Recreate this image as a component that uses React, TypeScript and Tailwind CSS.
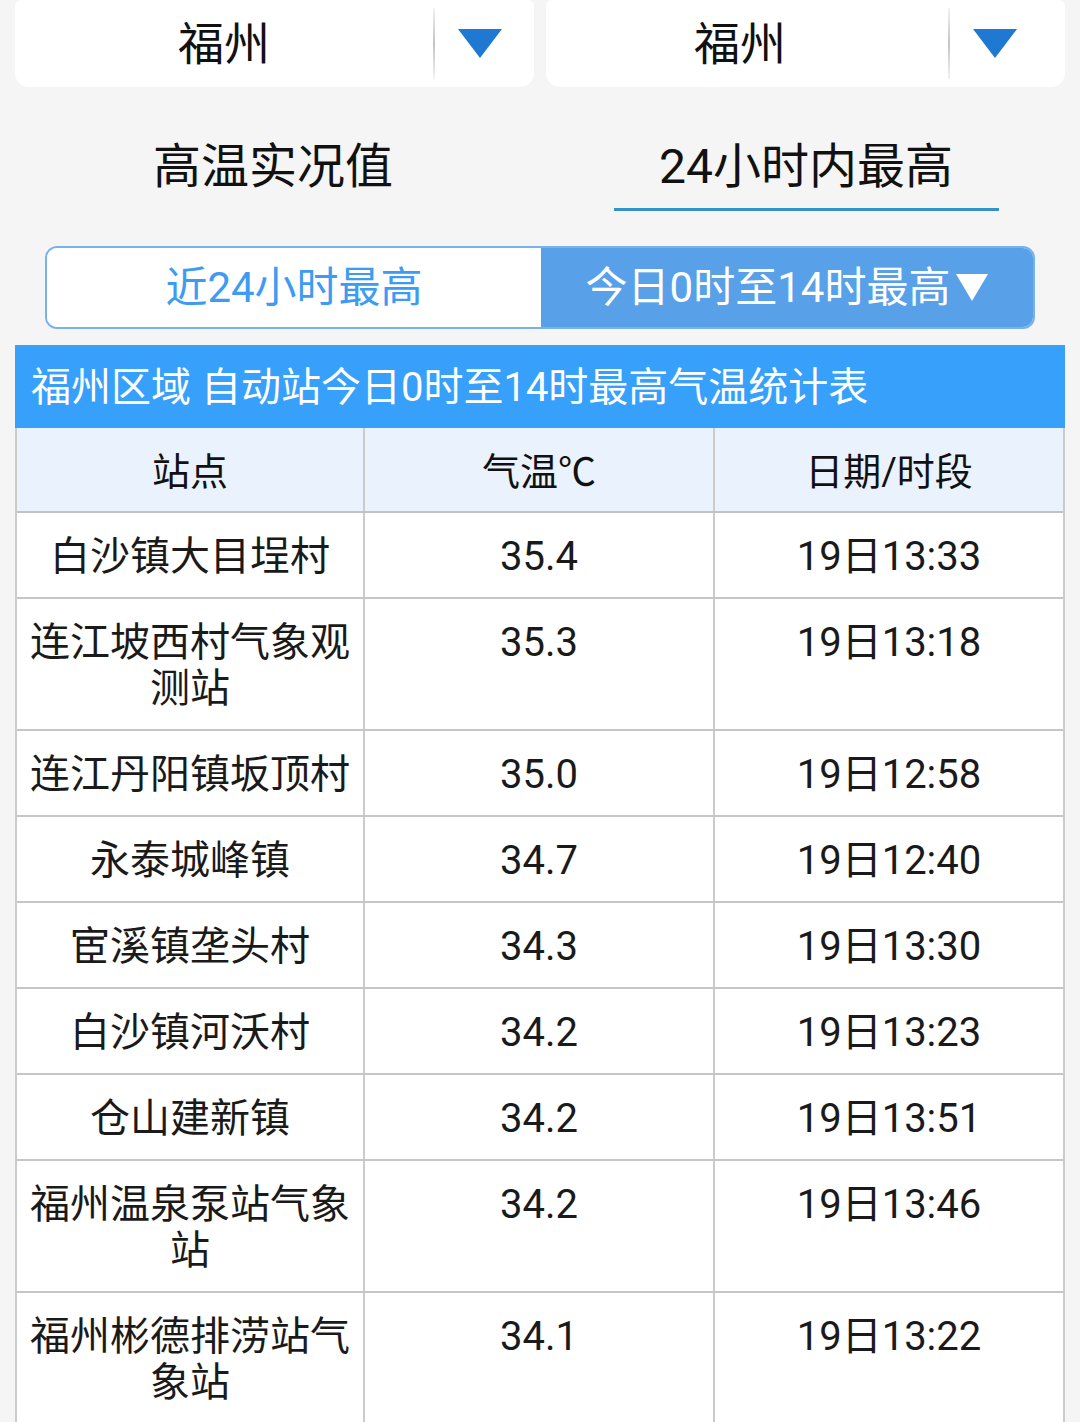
import React from 'react';

const FONT = { fontFamily: 'Roboto, "Noto Sans CJK SC", sans-serif' };

const rows: [string, string, string][] = [
  ['白沙镇大目埕村', '35.4', '19日13:33'],
  ['连江坡西村气象观测站', '35.3', '19日13:18'],
  ['连江丹阳镇坂顶村', '35.0', '19日12:58'],
  ['永泰城峰镇', '34.7', '19日12:40'],
  ['宦溪镇垄头村', '34.3', '19日13:30'],
  ['白沙镇河沃村', '34.2', '19日13:23'],
  ['仓山建新镇', '34.2', '19日13:51'],
  ['福州温泉泵站气象站', '34.2', '19日13:46'],
  ['福州彬德排涝站气象站', '34.1', '19日13:22'],
];

function CitySelect({ name, wide }: { name: string; wide: boolean }) {
  return (
    <div className="flex h-[87px] w-[519px] items-center rounded-b-[14px] rounded-t-[6px] bg-white">
      <div className={wide ? 'w-[418px] text-center text-[46px] leading-[56px] text-[#111]' : 'w-[402px] pr-[14px] text-center text-[46px] leading-[56px] text-[#111]'}>
        {name}
      </div>
      <div className="h-[71px] w-[2px] bg-gradient-to-b from-[#f2f2f2] via-[#c4c4c4] to-[#f2f2f2]" />
      <div className="flex flex-1 pl-[23px]">
        <svg width="44" height="29" viewBox="0 0 44 29">
          <path d="M0 0 H44 L22 29 Z" fill="#1f78d2" />
        </svg>
      </div>
    </div>
  );
}

export default function App() {
  return (
    <div className="h-[1422px] w-[1080px] overflow-hidden bg-[#f5f5f5]" style={FONT}>
      <div className="flex gap-[12px] px-[15px]">
        <CitySelect name="福州" wide />
        <CitySelect name="福州" wide={false} />
      </div>

      {/* tabs */}
      <div className="mt-[52px] flex">
        <div className="w-[546px] text-center text-[48px] leading-[56px] text-[#111]">高温实况值</div>
        <div className="flex w-[520px] flex-col items-center">
          <div className="text-[48px] leading-[56px] text-[#111]">24小时内最高</div>
          <div className="mt-[13px] h-[3px] w-[385px] bg-[#3393c6]" />
        </div>
      </div>

      {/* segment */}
      <div className="mx-[45px] mt-[35px] flex h-[83px] overflow-hidden rounded-[12px] border-2 border-[#78b2ee]">
        <div className="flex w-[494px] items-center justify-center bg-white text-[42px] text-[#3d9bf2]">
          近24小时最高
        </div>
        <div className="flex flex-1 items-center justify-center bg-[#58a1e8] text-[42px] text-white">
          今日0时至14时最高
          <svg className="ml-[6px]" width="32" height="27" viewBox="0 0 32 27">
            <path d="M0 0 H32 L16 27 Z" fill="#ffffff" />
          </svg>
        </div>
      </div>

      {/* table */}
      <div className="mx-[15px] mt-[16px]">
        <div className="flex h-[83px] items-center bg-[#37a0fa] pl-[16px] pt-[3px] text-[40px] text-white">
          福州区域 自动站今日0时至14时最高气温统计表
        </div>
        <div className="border-x-2 border-[#cbcbcb]">
          <div className="grid h-[85px] grid-cols-[348px_350px_1fr] border-b-2 border-[#c2c2c2] bg-[#eaf2fd] text-[38px] text-[#111]">
            <div className="flex items-center justify-center border-r-2 border-[#cbcbcb] pt-[5px]">站点</div>
            <div className="flex items-center justify-center border-r-2 border-[#cbcbcb] pt-[5px]">气温℃</div>
            <div className="flex items-center justify-center pt-[5px]">日期/时段</div>
          </div>
          {rows.map(([site, temp, time], i) => (
            <div key={i} className="grid grid-cols-[348px_350px_1fr] border-b-2 border-[#c6c6c6] bg-white text-[40px] leading-[46px] text-[#1a1a1a]">
              <div className="border-r-2 border-[#cbcbcb] px-[12px] pb-[17px] pt-[21px] text-center">{site}</div>
              <div className="border-r-2 border-[#cbcbcb] px-[12px] pb-[17px] pt-[21px] text-center">{temp}</div>
              <div className="px-[12px] pb-[17px] pt-[21px] text-center">{time}</div>
            </div>
          ))}
        </div>
      </div>
    </div>
  );
}
